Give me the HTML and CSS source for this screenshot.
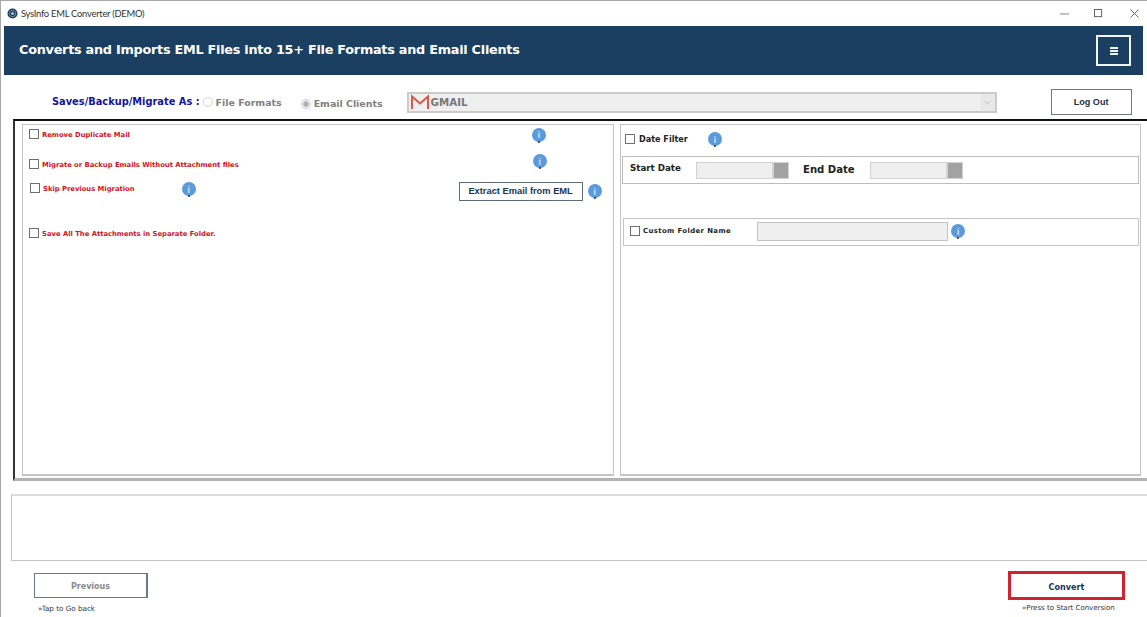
FILE: index.html
```html
<!DOCTYPE html>
<html lang="en">
<head>
<meta charset="utf-8">
<title>SysInfo EML Converter (DEMO)</title>
<link rel="stylesheet" href="styles.css">
</head>
<body>
<div class="window">
  <div class="titlebar">
    <svg class="app-icon" viewBox="0 0 12 12"><circle cx="6" cy="6" r="5.5" fill="#1c3f5e"/><circle cx="6" cy="6" r="3.4" fill="none" stroke="#b9d3dc" stroke-width="1" stroke-dasharray="1.2 .8"/><circle cx="6" cy="6" r="1.4" fill="#dbe8ec"/></svg>
    <span class="app-title">SysInfo EML Converter (DEMO)</span>
    <div class="win-controls">
      <svg class="wc wc-min" viewBox="0 0 10 10"><path d="M0 5.500H10" stroke="#777" stroke-width="1"/></svg>
      <svg class="wc wc-max" viewBox="0 0 10 10"><rect x=".5" y=".5" width="8" height="8" fill="none" stroke="#555" stroke-width="1"/></svg>
      <svg class="wc wc-close" viewBox="0 0 10 10"><path d="M.5 .5L9.500 9.500M9.500 .5L.5 9.500" stroke="#555" stroke-width="1"/></svg>
    </div>
  </div>

  <header class="banner">
    <h1 class="banner-title">Converts and Imports EML Files into 15+ File Formats and Email Clients</h1>
    <button class="menu-btn" aria-label="Menu"><span></span><span></span><span></span></button>
  </header>

  <div class="saveas">
    <span class="saveas-label">Saves/Backup/Migrate As :</span>
    <label class="radio-item"><span class="radio"></span>File Formats</label>
    <label class="radio-item radio-item-2"><span class="radio radio-on"></span>Email Clients</label>
    <div class="select">
      <svg class="gmail" viewBox="0 0 20 16"><path d="M2 15V2.500L10 9.500 18 2.500V15" fill="none" stroke="#d9574b" stroke-width="2"/></svg>
      <span class="select-text">GMAIL</span>
      <span class="select-arrow"><svg viewBox="0 0 8 5"><path d="M1 1l3 3 3-3" fill="none" stroke="#b5b5b5" stroke-width="1"/></svg></span>
    </div>
    <button class="logout">Log Out</button>
  </div>

  <main class="main">
    <section class="panel panel-left">
      <div class="opt opt-1">
        <span class="check"></span><span class="opt-label">Remove Duplicate Mail</span>
        <span class="info info-1">i</span>
      </div>
      <div class="opt opt-2">
        <span class="check"></span><span class="opt-label">Migrate or Backup Emails Without Attachment files</span>
        <span class="info info-2">i</span>
      </div>
      <div class="opt opt-3">
        <span class="check"></span><span class="opt-label">Skip Previous Migration</span>
        <span class="info info-3">i</span>
        <button class="extract">Extract Email from EML</button>
        <span class="info info-4">i</span>
      </div>
      <div class="opt opt-4">
        <span class="check"></span><span class="opt-label">Save All The Attachments in Separate Folder.</span>
      </div>
    </section>
    <section class="panel panel-right">
      <div class="date-filter">
        <span class="check"></span><span class="df-label">Date Filter</span>
        <span class="info info-5">i</span>
      </div>
      <div class="date-box">
        <span class="date-label">Start Date</span>
        <span class="date-input"></span><span class="date-btn"></span>
        <span class="date-label date-label-end">End Date</span>
        <span class="date-input"></span><span class="date-btn"></span>
      </div>
      <div class="folder-box">
        <span class="check"></span><span class="folder-label">Custom Folder Name</span>
        <span class="folder-input"></span>
        <span class="info info-6">i</span>
      </div>
    </section>
  </main>

  <div class="logbox"></div>

  <footer class="footer">
    <div class="foot-left">
      <button class="prev">Previous</button>
      <span class="hint">»Tap to Go back</span>
    </div>
    <div class="foot-right">
      <button class="convert">Convert</button>
      <span class="hint">»Press to Start Conversion</span>
    </div>
  </footer>
</div>
</body>
</html>
```

FILE: styles.css
```css
* { box-sizing: border-box; }
html, body { margin: 0; padding: 0; background: #fff; }
body { width: 1147px; height: 617px; overflow: hidden; font-family: "DejaVu Sans", sans-serif; }
button { font-family: inherit; background: #fff; padding: 0; cursor: default; }

.window { width: 1147px; height: 617px; border-top: 1px solid #a8a8a8; border-left: 1px solid #a8a8a8; display: flex; flex-direction: column; background: #fff; overflow: hidden; }

.titlebar { height: 25px; flex: none; display: flex; align-items: center; padding-left: 6px; }
.app-icon { width: 11px; height: 11px; margin-right: 3px; }
.app-title { font: 400 9.400px Lato, sans-serif; letter-spacing: -.25px; color: #333; white-space: nowrap; }
.win-controls { margin-left: auto; display: flex; align-items: center; padding-right: 8px; }
.wc { display: block; width: 9px; height: 9px; }
.wc-min { margin-right: 25px; }
.wc-max { margin-right: 27px; }

.banner { height: 49px; flex: none; margin-left: 3px; width: 1139px; background: #1b3f60; display: flex; align-items: center; padding: 0 12px 0 15px; }
.banner-title { margin: 0; font-size: 12.800px; line-height: 1; font-weight: 700; letter-spacing: -.25px; color: #fff; white-space: nowrap; }
.menu-btn { margin-left: auto; width: 35px; height: 31px; background: transparent; border: 2px solid #f2f5f7; display: flex; flex-direction: column; align-items: center; justify-content: center; gap: 1px; }
.menu-btn span { display: block; width: 8px; height: 2px; background: #f2f5f7; }

.saveas { height: 44px; flex: none; display: flex; align-items: center; padding-top: 10px; }
.saveas-label { margin: -2px 0 0 51px; font-size: 9.830px; font-weight: 700; color: #14149c; white-space: nowrap; }
.radio-item { display: flex; align-items: center; margin-left: 3px; font-size: 9.430px; font-weight: 700; color: #808080; white-space: nowrap; }
.radio-item-2 { margin-left: 19px; padding-top: 3px; }
.radio { width: 10px; height: 10px; border: 1px solid #d4d4d4; border-radius: 50%; margin-right: 3px; background: #fff; }
.radio-on { border-color: #cfcfcf; background: radial-gradient(circle, #b0b0b0 0 2.500px, #f1f1f1 3px); }
.select { margin-left: 24px; width: 590px; height: 21px; background: #efefef; border: 2px solid #cbcbcb; display: flex; align-items: center; padding-left: 1px; }
.gmail { width: 20px; height: 16px; flex: none; }
.select-text { font-size: 10.300px; font-weight: 700; color: #777; margin-left: 1px; }
.select-arrow { margin-left: auto; width: 14px; height: 17px; display: flex; align-items: center; justify-content: center; background: #e8e8e8; }
.select-arrow svg { width: 7px; height: 5px; }
.logout { margin: -1px 0 0 54px; width: 81px; height: 26px; border: 1px solid #6e7780; font: 700 9.100px "Liberation Sans", sans-serif; color: #1d3146; }

.main { height: 362px; flex: none; margin-left: 12px; border-top: 2px solid #111; border-left: 2px solid #333; border-bottom: 3px solid #b4b4b4; display: flex; padding: 3px 6px 2px 7px; gap: 6px; }
.panel { border: 1px solid #c4c4c4; border-bottom-width: 2px; height: 352px; }
.panel-left { width: 592px; display: flex; flex-direction: column; }
.panel-right { width: 521px; }

.check { display: block; flex: none; width: 10px; height: 10px; border: 1px solid #6f6f6f; background: #fff; }
.opt { display: flex; align-items: center; }
.opt-label { margin-left: 3px; padding-top: 1px; font-size: 6.800px; font-weight: 700; color: #d1141c; white-space: nowrap; }
.opt-1 { margin: 2px 0 0 6px; height: 14px; }
.opt-2 { margin: 16px 0 0 6px; height: 14px; }
.opt-3 { margin: 10px 0 0 7px; height: 14px; }
.opt-4 { margin: 31px 0 0 6px; height: 14px; }

.info { position: relative; display: flex; flex: none; align-items: center; justify-content: center; width: 14px; height: 14px; border-radius: 50%; background: #5b9bdc; color: #cfe0f2; font: 700 9px "Open Sans", sans-serif; }
.info::after { content: ""; position: absolute; left: 6px; bottom: -1px; width: 2px; height: 2px; border-radius: 50%; background: #1d3146; }
.info-1 { margin: 1px 0 0 402px; }
.info-2 { margin: -6px 0 0 294px; }
.info-3 { margin: 2px 0 0 47px; }
.extract { margin: 6px 0 0 263px; width: 124px; height: 19px; border: 1px solid #5f6b78; font: 700 9.300px "Liberation Sans", sans-serif; color: #1b3450; white-space: nowrap; }
.info-4 { margin: 6px 0 0 5px; }

.date-filter { display: flex; align-items: center; padding: 0 0 0 4px; height: 28px; }
.df-label { margin-left: 4px; font-size: 8.100px; font-weight: 700; color: #222; white-space: nowrap; }
.info-5 { margin-left: 20px; }

.date-box { margin: 3px 1px 0 1px; height: 28px; border: 1px solid #bdbdbd; display: flex; align-items: center; padding-left: 7px; }
.date-label { font-size: 8.700px; font-weight: 700; color: #222; white-space: nowrap; width: 66px; padding-bottom: 5px; }
.date-label-end { margin-left: 14px; width: 67px; font-size: 10.100px; padding-bottom: 1px; }
.date-input { width: 77px; height: 17px; background: #efefef; border: 1px solid #d2d2d2; }
.date-btn { width: 16px; height: 17px; background: #a2a2a2; border: 1px solid #d2d2d2; }

.folder-box { margin: 34px 1px 0 2px; height: 28px; border: 1px solid #c4c4c4; display: flex; align-items: center; padding: 0 0 2px 6px; }
.folder-label { margin-left: 3px; font-size: 6.900px; font-weight: 700; color: #222; white-space: nowrap; width: 114px; letter-spacing: .4px; }
.folder-input { width: 191px; height: 19px; background: #efefef; border: 1px solid #c4c4c4; }
.info-6 { margin-left: 3px; }

.logbox { height: 67px; flex: none; margin: 13px 0 0 10px; border: 1px solid #c4c4c4; border-top: 2px solid #dcdcdc; border-right: 0; }

.footer { flex: none; display: flex; justify-content: space-between; padding: 10px 22px 0 33px; }
.foot-left, .foot-right { display: flex; flex-direction: column; }
.prev { width: 114px; height: 25px; margin-top: 2px; padding-top: 2px; border: 1px solid #6b7885; border-right-width: 2px; font-size: 8px; font-weight: 700; color: #8a8a8a; }
.convert { width: 117px; height: 29px; padding-top: 2px; border: 3px solid #d0232f; font-size: 8.100px; font-weight: 700; color: #1b3450; }
.hint { font-size: 7.200px; color: #333; white-space: nowrap; }
.foot-left .hint { margin: 6px 0 0 4px; }
.foot-right .hint { margin: 4px 0 0 14px; font-size: 7px; }
```
